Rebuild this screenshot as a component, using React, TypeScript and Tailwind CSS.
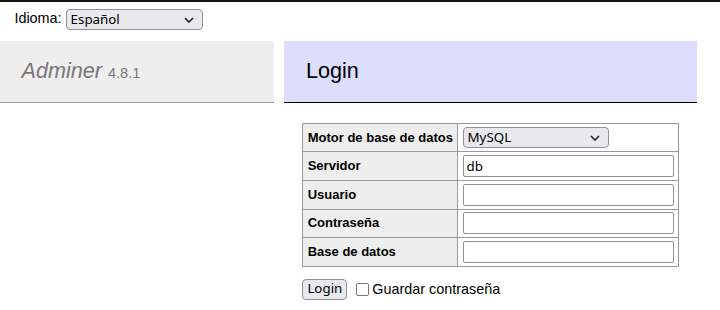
const control = "font-['Noto_Sans',sans-serif] text-[13.33px] text-black";

const fields = [
  { label: "Servidor", value: "db" },
  { label: "Usuario", value: "" },
  { label: "Contraseña", value: "" },
  { label: "Base de datos", value: "" },
];

const th = "border border-[#999] bg-[#eee] px-[4.32px] py-[2.88px] text-left text-[13px] font-bold";
const td = "border border-[#999] px-[4.32px] py-[2.88px]";

function Chevron() {
  return (
    <svg width="10" height="6" viewBox="0 0 10 6" className="shrink-0">
      <path d="M1 1l4 4 4-4" fill="none" stroke="#222" strokeWidth="1.6" />
    </svg>
  );
}

function FakeSelect({ value, width }: { value: string; width: string }) {
  return (
    <div
      className={`${control} ${width} inline-flex h-[21px] items-center justify-between rounded-[4px] border border-[#8f8f9d] bg-[#e9e9ed] pl-[4px] pr-[8px] align-middle leading-none`}
    >
      <span>{value}</span>
      <Chevron />
    </div>
  );
}

export default function App() {
  return (
    <div className="min-h-[310px] border-t-2 border-[#141414] bg-white font-['Liberation_Sans',Arial,sans-serif] text-[14.4px] leading-[1.25] text-black">
      <div className="h-[38.8px] px-[14.4px] pt-[4.3px] leading-[25.9px]">
        Idioma: <FakeSelect value="Español" width="w-[137px]" />
      </div>

      <div className="flex items-start">
        <div className="w-[273.6px] shrink-0">
          <h1 className="border-b border-[#999] bg-[#eee] px-[21.6px] py-[17.28px] text-[21.6px] font-normal text-[#777]">
            <span className="italic">Adminer</span>{" "}
            <span className="text-[14.5px]">4.8.1</span>
          </h1>
        </div>

        <div className="ml-[28.8px] flex-1 pr-[23px]">
          <h2 className="-ml-[18px] mb-[20px] border-b border-black bg-[#ddf] px-[21.6px] py-[17.28px] text-[21.6px] font-normal">
            Login
          </h2>

          <table className="border-collapse border border-[#999]">
            <tbody>
              <tr>
                <th className={th}>Motor de base de datos</th>
                <td className={td}>
                  <FakeSelect value="MySQL" width="w-[146px]" />
                </td>
              </tr>
              {fields.map((f) => (
                <tr key={f.label}>
                  <th className={th}>{f.label}</th>
                  <td className={td}>
                    <input
                      type="text"
                      defaultValue={f.value}
                      className={`${control} block h-[22px] w-[211px] rounded-[2px] border border-[#8f8f9d] bg-white px-[3px] outline-none`}
                    />
                  </td>
                </tr>
              ))}
            </tbody>
          </table>

          <div className="mt-[11.5px] flex items-center">
            <button
              className={`${control} h-[21px] rounded-[4px] border border-[#8f8f9d] bg-[#e9e9ed] px-[4px] leading-none`}
            >
              Login
            </button>
            <label className="ml-[9px] flex items-center">
              <span className="mr-[3px] inline-block h-[13px] w-[13px] rounded-[2px] border border-[#767676] bg-white" />
              Guardar contraseña
            </label>
          </div>
        </div>
      </div>
    </div>
  );
}
